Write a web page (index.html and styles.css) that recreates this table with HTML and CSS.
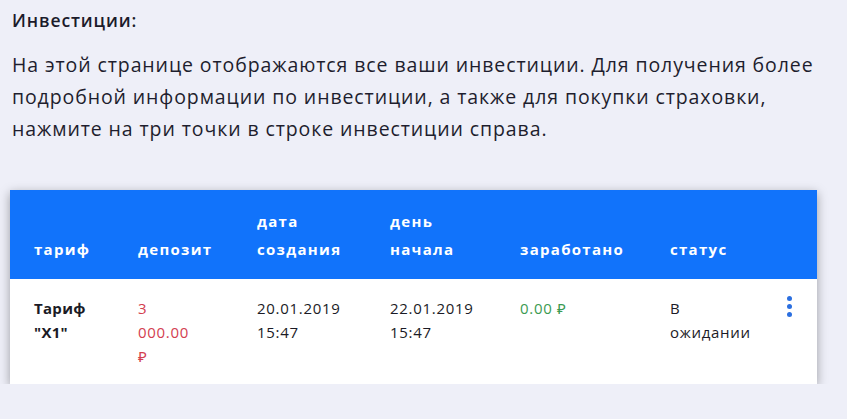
FILE: index.html
```html
<!DOCTYPE html>
<html lang="ru">
<head>
<meta charset="utf-8">
<link rel="stylesheet" href="styles.css">
</head>
<body>
<div class="page">
  <h2 class="title">Инвестиции:</h2>
  <p class="intro">На этой странице отображаются все ваши инвестиции. Для получения более подробной информации по инвестиции, а также для покупки страховки, нажмите на три точки в строке инвестиции справа.</p>
  <div class="card">
    <div class="row head">
      <div class="cell c1">тариф</div>
      <div class="cell c2">депозит</div>
      <div class="cell c3">дата создания</div>
      <div class="cell c4">день начала</div>
      <div class="cell c5">заработано</div>
      <div class="cell c6">статус</div>
    </div>
    <div class="row body">
      <div class="cell c1 bold">Тариф "X1"</div>
      <div class="cell c2 red">3 000.00 ₽</div>
      <div class="cell c3">20.01.2019 15:47</div>
      <div class="cell c4">22.01.2019 15:47</div>
      <div class="cell c5 green">0.00 ₽</div>
      <div class="cell c6">В ожидании</div>
      <div class="more"><span></span><span></span><span></span></div>
    </div>
  </div>
</div>
</body>
</html>
```

FILE: styles.css
```css
html, body {
  margin: 0;
  padding: 0;
  background: #eeeff8;
}
.page {
  padding: 8px 0 0 12px;
  font-family: "Open Sans", "Noto Sans", sans-serif;
  color: #1b1b2b;
}
.title {
  margin: 0;
  font-size: 17.5px;
  line-height: 24px;
  font-weight: 600;
  letter-spacing: 0.9px;
}
.intro {
  margin: 17px 0 0;
  font-size: 19.5px;
  line-height: 32px;
  letter-spacing: 0.9px;
  width: 816px;
  color: #1e1e2e;
}
.card {
  margin: 45px 0 0 -2px;
  width: 807px;
  background: #fff;
  box-shadow: 0 3px 10px rgba(0, 0, 0, 0.35);
}
.row {
  display: flex;
  padding-left: 24px;
}
.head {
  background: #1173fb;
  color: #fff;
  align-items: flex-end;
  padding-top: 17px;
  padding-bottom: 16px;
  font-weight: 700;
  font-size: 15px;
  line-height: 28px;
  letter-spacing: 1.3px;
}
.body {
  position: relative;
  padding-top: 17px;
  padding-bottom: 16px;
  font-size: 15px;
  line-height: 24px;
  letter-spacing: 0.7px;
  align-items: flex-start;
  color: #1b1b26;
}
.cell {
  box-sizing: border-box;
  padding-right: 40px;
}
.c1 { width: 104px; }
.c2 { width: 119px; padding-right: 60px; }
.c3 { width: 133px; }
.c4 { width: 130px; }
.c5 { width: 150px; }
.c6 { width: 112px; padding-right: 22px; }
.bold { font-weight: 700; letter-spacing: 0.3px; }
.red { color: #d3404f; }
.green { color: #3b9b52; }
.more {
  position: absolute;
  left: 777px;
  top: 17px;
  display: flex;
  flex-direction: column;
  gap: 3px;
}
.more span {
  width: 5px;
  height: 5px;
  border-radius: 50%;
  background: #2b6fe0;
}
```
